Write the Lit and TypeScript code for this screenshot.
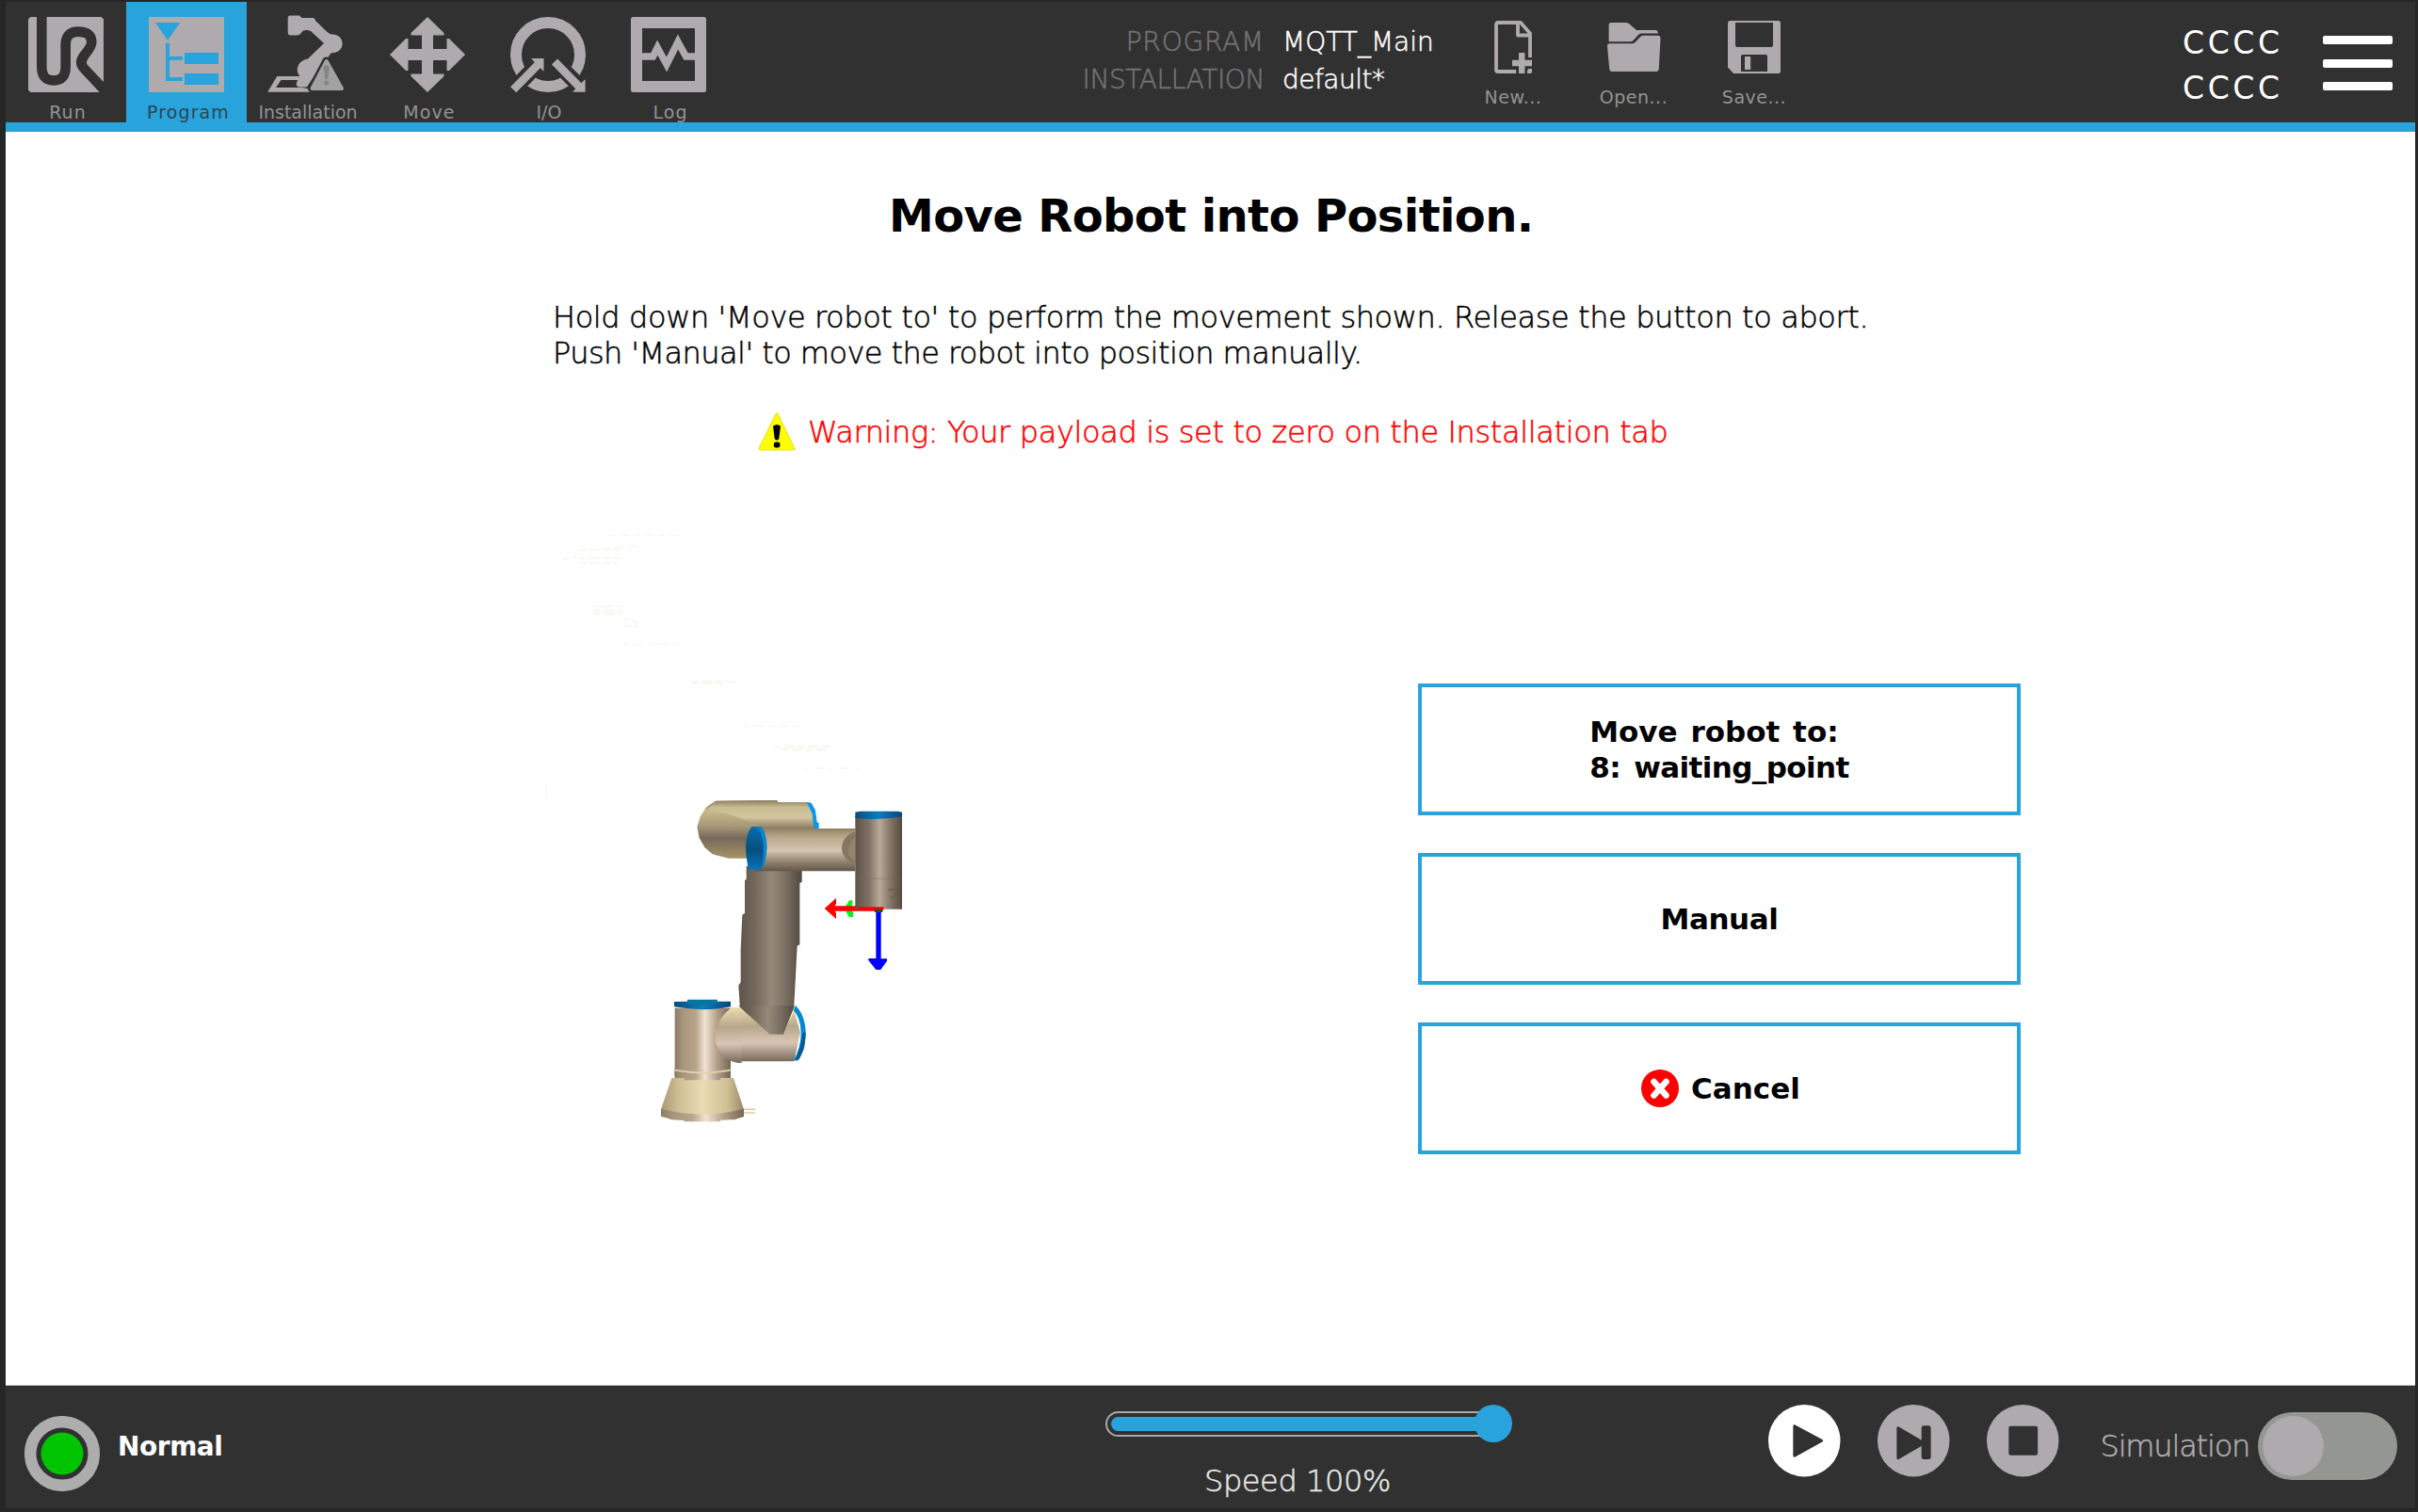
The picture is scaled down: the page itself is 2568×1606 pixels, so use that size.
import { LitElement, html, svg, css } from "lit";
import { customElement, property } from "lit/decorators.js";

const GREY = "#aeaaad";
const DARK = "#313131";
const BLUE = "#29a3dc";

const tabIcons: Record<string, unknown> = {
  run: svg`
    <path d="M4 0H80V80H4Q0 80 0 76V4Q0 0 4 0Z" fill=${GREY} />
    <circle cx="79.6" cy="0.4" r="1.4" fill=${DARK} />
    <path d="M14.3 -2V53Q14.3 67.5 27 67.5Q39.7 67.5 39.7 53V30Q39.7 15.6 53 15.6Q67.3 15.6 67.3 27Q67.3 31 60.5 39.5Q53 48 59.5 55L84 81" fill="none" stroke=${DARK} stroke-width="10.6" />`,
  program: svg`
    <rect width="80" height="80" fill=${GREY} />
    <path d="M7 6H33.3L20 24.7ZM18 27.7H22V42H36V45.7H22V64H36V68H18ZM38 38H74V50H38ZM38 60H74V72H38Z" fill=${BLUE} />`,
  installation: svg`
    <path d="M22 -1.4H32Q33.5 1 35 1H47Q48.5 1.5 49 4L61 15.5Q64 18.5 67 18.6A9.8 9.8 0 1 1 66 38L48 62L40 74.5H31Q28 73 29 70L32 62.5Q28 57 31 51Q34 45.5 41 44.5L58 28L44 15Q41 13.5 36 14.5L32.5 18.5Q31 19.5 29 19.5H22Q19.7 19 19.7 17V2Q19.7 -1 22 -1.4Z" fill=${GREY} />
    <path d="M8.3 63H32L30.6 67H12.5L7 75H35L44 77V79.8H-1.8Z" fill=${GREY} />
    <path d="M60.7 47L77 76H45.5Z" fill="#9d9d9d" stroke=${DARK} stroke-width="9" stroke-linejoin="round" />
    <path d="M60.7 47L77 76H45.5Z" fill="#a3a2a3" stroke="#a3a2a3" stroke-width="4" stroke-linejoin="round" />
    <path d="M57.5 53Q60.7 49 64 53L62.3 66H59.2Z" fill="#878687" />
    <circle cx="60.7" cy="70" r="2.6" fill="#878687" />`,
  move: svg`
    <path d="M40 0L57.5 17V19.5H46V34H60.5V23H63L80 40L63 57H60.5V46H46V60.5H57.5V63L40 80L22.5 63V60.5H34V46H19.5V57H17L0 40L17 23H19.5V34H34V19.5H22.5V17Z" fill=${GREY} />`,
  io: svg`
    <circle cx="40" cy="40" r="34" fill="none" stroke=${GREY} stroke-width="12" />
    <path d="M-2 82.5L30 49.5M47.5 47.5L82 82" stroke=${DARK} stroke-width="16.5" />
    <path d="M3.2 77.2L31 49M47 47.5L75 76" stroke=${GREY} stroke-width="8.6" />
    <path d="M22 44H35.5V58ZM79.6 66V79.8H66Z" fill=${GREY} />`,
  log: svg`
    <rect width="80" height="80" rx="2.5" fill=${GREY} />
    <rect x="12" y="12" width="56" height="56" fill=${DARK} />
    <path d="M11 42H23.5L28.2 32.5L38 50.5L50 26.5L58.5 42H69" fill="none" stroke=${GREY} stroke-width="7.4" stroke-miterlimit="8" />`,
};

@customElement("nav-tab")
class NavTab extends LitElement {
  @property() icon = "run";
  @property() label = "";
  @property({ type: Boolean, reflect: true }) active = false;

  static styles = css`
    :host { display: flex; flex-direction: column; align-items: center; width: 128px; height: 128px; padding-top: 16px; box-sizing: border-box; flex: none; }
    :host([active]) { background: #29a3dc; }
    svg { display: block; width: 80px; height: 80px; overflow: visible; flex: none; }
    .label { margin: 10px 0 0 4px; font-size: 19px; line-height: 22px; letter-spacing: 1.1px; color: #949294; white-space: nowrap; }
    .label.wide { margin-left: 2px; letter-spacing: 0; }
    :host([active]) .label { color: #2c4653; }
  `;

  render() {
    return html`<svg viewBox="0 0 80 80">${tabIcons[this.icon]}</svg>
      <div class="label ${this.label === "Installation" || this.label === "I/O" ? "wide" : ""}">${this.label}</div>`;
  }
}

const fileIcons: Record<string, unknown> = {
  new: svg`<svg viewBox="0 0 40 56" width="40" height="56">
      <path d="M28 2H4Q2 2 2 4V52Q2 54 4 54H38V13.5ZM25 2V15.5H38" fill="none" stroke=${GREY} stroke-width="3.8" stroke-linejoin="round" />
      <path d="M29.2 31V56M16.5 45H40" stroke=${DARK} stroke-width="12" />
      <path d="M29.2 34V56M19 45H40" stroke=${GREY} stroke-width="6.4" />
      <path d="M35.5 56V52.5L37.5 51.5H40V54.5L38.5 56Z" fill=${GREY} />
    </svg>`,
  open: svg`<svg viewBox="0 -2 57 56" width="57" height="56">
      <path d="M4 0H20.5Q22 0 23.5 1.5L31 8H52Q54 8.5 54 11.5H36Q34 11.7 33 13L27 19.5Q26 20.3 24 20.3H1.6V3Q1.6 0 4 0Z" fill=${GREY} />
      <path d="M0 25Q0 22.3 2 22.3H27Q28.5 22 30 20.5L36 14.3Q37 13.7 38.5 13.7H54Q56.5 14 56.5 16.5L54.8 49Q54.5 52 52 52H5Q2.4 52 2.2 49Z" fill=${GREY} />
    </svg>`,
  save: svg`<svg viewBox="0 0 56 56" width="56" height="56">
      <path d="M2.5 0H53.5Q56 0 56 2.5V53.5Q56 56 53.5 56H6L0 49.5V2.5Q0 0 2.5 0Z" fill=${GREY} />
      <path d="M8 2H48V26Q48 28 46 28H10Q8 28 8 26ZM16 36H40Q42 36 42 38V54H14V38Q14 36 16 36Z" fill=${DARK} />
      <rect x="18" y="38" width="6.2" height="14" fill=${GREY} />
    </svg>`,
};

@customElement("robot-view")
class RobotView extends LitElement {
  static styles = css`
    :host { display: block; width: 440px; height: 670px; }
    svg { display: block; }
  `;

  render() {
    return html`<svg width="440" height="670" viewBox="0 0 440 670">
      <defs>
        <linearGradient id="post"><stop offset="0" stop-color="#8c7a66" /><stop offset=".15" stop-color="#a8977d" /><stop offset=".38" stop-color="#b8a58b" /><stop offset=".54" stop-color="#f2e2d2" /><stop offset=".75" stop-color="#b5a28c" /><stop offset="1" stop-color="#756554" /></linearGradient>
        <linearGradient id="foot"><stop offset="0" stop-color="#a89878" /><stop offset=".2" stop-color="#cdbd92" /><stop offset=".5" stop-color="#eadcb4" /><stop offset=".8" stop-color="#d0c094" /><stop offset="1" stop-color="#9c8a6c" /></linearGradient>
        <linearGradient id="link"><stop offset="0" stop-color="#5e5449" /><stop offset=".25" stop-color="#71675a" /><stop offset=".52" stop-color="#95897a" /><stop offset=".75" stop-color="#796e61" /><stop offset="1" stop-color="#51483e" /></linearGradient>
        <linearGradient id="tool"><stop offset="0" stop-color="#5d5347" /><stop offset=".3" stop-color="#817466" /><stop offset=".52" stop-color="#b8a999" /><stop offset=".78" stop-color="#7d7061" /><stop offset="1" stop-color="#554a3f" /></linearGradient>
        <linearGradient id="arm" x2="0" y2="1"><stop offset="0" stop-color="#8f8262" /><stop offset=".2" stop-color="#b8a98a" /><stop offset=".52" stop-color="#d3c4b1" /><stop offset=".8" stop-color="#8d7d6b" /><stop offset="1" stop-color="#63574b" /></linearGradient>
        <linearGradient id="back" x2="0" y2="1"><stop offset="0" stop-color="#80745a" /><stop offset=".18" stop-color="#c8ba8c" /><stop offset=".45" stop-color="#a69878" /><stop offset=".65" stop-color="#75695b" /><stop offset="1" stop-color="#a69467" /></linearGradient>
        <linearGradient id="backTop" x2="0" y2="1"><stop offset="0" stop-color="#8b7e60" /><stop offset=".25" stop-color="#c8bc91" /><stop offset=".6" stop-color="#d3c69f" /><stop offset="1" stop-color="#8b7c62" /></linearGradient>
        <linearGradient id="hip" x2="0" y2="1"><stop offset="0" stop-color="#eadbb0" /><stop offset=".35" stop-color="#b7a78a" /><stop offset=".65" stop-color="#d8c5b5" /><stop offset="1" stop-color="#79695a" /></linearGradient>
        <linearGradient id="cap"><stop offset="0" stop-color="#0a4a7d" /><stop offset=".5" stop-color="#0a7dbd" /><stop offset="1" stop-color="#064878" /></linearGradient>
        <linearGradient id="capV" x2="0" y2="1"><stop offset="0" stop-color="#0a6cae" /><stop offset=".55" stop-color="#04507f" /><stop offset="1" stop-color="#0873b5" /></linearGradient>
      </defs>
      <g fill="none" stroke="#faf8f1" stroke-width="1.5" stroke-dasharray="7 3 12 4">
        <path d="M87 28.500H165M96 40.500H117M102 144.500H162M230 231.500H292M294 276H352M20.500 294V310" />
        <path d="M38 54.500L52 51M56 44L99 43M55 53H100M56 58H96M68 104H101M70 109H102M71 112H100M102 117L118 122M104 125H118M174 184H222M176 186H208M262 253H324M270 256H322" stroke="#f7f4ea" />
      </g>
      <g transform="translate(120 290) scale(.33333)">
        <path d="M240 62L435 60L440 67L535 67L560 150L345 245H282L230 232L205 210L188 180L181 145L192 110L210 82Z" fill="url(#back)" />
        <path d="M240 62L435 60L440 67H535L560 150H390Q300 100 215 90Z" fill="url(#backTop)" />
        <path d="M530 66L545 68L558 92L563 130L569 133V150H553L548 105L540 86Z" fill="#0898e6" />
        <path d="M338 270H515V320L508 324V520L500 524L495 620L490 712L455 802H430L318 725L313 650L320 640V535L325 425L333 420V315L338 312Z" fill="url(#link)" />
        <path d="M290 720H320L412 806L456 804L490 730L510 800L490 892H300Q240 880 240 810Q245 745 290 720Z" fill="url(#hip)" />
        <path d="M110 722H288Q240 770 240 820Q245 870 288 880V945H110Z" fill="url(#post)" />
        <path d="M288 722Q240 760 240 818Q245 885 310 897H323V750L305 722Z" fill="url(#hip)" />
        <path d="M313 715L412 806H456L492 715Z" fill="url(#link)" />
        <path d="M495 714Q530 750 527 815Q522 870 500 890L488 888Q512 850 512 800Q510 750 488 730Z" fill="#0788ce" />
        <path d="M518 800H527L522 850L506 886L494 889Q510 850 518 800Z" fill="#075b92" />
        <path d="M108 702L150 701V695H245V701H288V718Q200 735 108 718Z" fill="url(#cap)" />
        <path d="M150 696H245V708Q200 716 150 708Z" fill="#08759f" />
        <path d="M100 945H297L330 1045V1068Q200 1100 66 1068V1045Z" fill="url(#foot)" />
        <path d="M66 1043Q200 1078 330 1043V1068L300 1078H255V1084H140V1080L100 1078L66 1066Z" fill="url(#post)" />
        <path d="M109 915Q200 940 288 915V940L255 946V952H140V946L109 938Z" fill="url(#post)" />
        <path d="M109 920Q200 936 288 920" fill="none" stroke="#e2d3ab" stroke-width="5" />
        <path d="M330 1045H366M330 1056H366" stroke="#dccbb0" stroke-width="5" />
        <path d="M365 150H685V286H365Z" fill="url(#arm)" />
        <path d="M685 160Q642 175 642 215Q645 250 685 262Z" fill="#857761" />
        <path d="M685 176Q660 200 664 235L685 256Z" fill="#94856b" />
        <path d="M355 144H385Q403 170 403 210Q402 255 385 281H345Q336 240 336 205Q338 165 355 144Z" fill="url(#capV)" />
        <path d="M358 144H386Q403 170 403 210Q402 250 388 278Q394 240 392 205Q388 160 372 146Z" fill="#0886d0" />
        <path d="M665 380L676 378V392L671 405L678 418V432H665L654 412V398Z" fill="#00f51b" />
        <path d="M610 405H765" stroke="#f00" stroke-width="17" />
        <path d="M587 405L624 372V390L616 405L624 420V438Z" fill="#f00" />
        <path d="M685 110H834V407H685Z" fill="url(#tool)" />
        <path d="M695 400H775V411H695Z" fill="#f00" />
        <path d="M685 310H834" stroke="#746858" stroke-width="3" opacity=".4" />
        <path d="M790 348L806 342L818 350L812 366L796 370" fill="none" stroke="#665b48" stroke-width="4" />
        <path d="M685 98L700 95H820L834 98V112Q760 126 685 116Z" fill="url(#cap)" />
        <path d="M751 412H767V565H786V572L766 600H751L727 570V564H751Z" fill="#00f" />
        <path d="M746 407H772V417H746Z" fill="#33472f" />
      </g>
    </svg>`;
  }
}

@customElement("app-root")
class AppRoot extends LitElement {
  static styles = css`
    :host { display: block; width: 2568px; height: 1606px; box-sizing: border-box; padding: 2px 3px 4px 6px; background: #272627; overflow: hidden; font-family: "DejaVu Sans", sans-serif; }
    * { box-sizing: border-box; }
    .screen { display: flex; flex-direction: column; height: 1600px; background: #fff; }
    .light { font-weight: 200; -webkit-text-stroke: 0.5px currentColor; }

    header { display: flex; height: 138px; background: #313131; border-bottom: 10px solid #29a3dc; flex: none; }
    .files { display: grid; grid-template-columns: 196px max-content; column-gap: 19px; align-content: start; padding-top: 23px; margin-left: 373px; width: 396px; flex: none; font-size: 28px; line-height: 40px; white-space: nowrap; }
    .key { color: #747274; text-align: right; }
    .key.program { letter-spacing: 0.8px; }
    .key.install { letter-spacing: -0.4px; }
    .value { color: #fff; }
    .value.install { letter-spacing: -0.5px; }
    .action { display: flex; flex-direction: column; align-items: center; width: 128px; padding-top: 20px; flex: none; }
    .action svg { display: block; flex: none; }
    .action span { margin-top: 14px; font-size: 19px; line-height: 22px; color: #949294; letter-spacing: 0.5px; }
    .codes { margin-left: 391px; padding-top: 20px; width: 149px; flex: none; color: #fff; font-size: 33px; line-height: 48px; letter-spacing: 3.6px; }
    .menu { display: flex; flex-direction: column; gap: 15.500px; padding-top: 36px; }
    .menu i { display: block; width: 74px; height: 9px; border-radius: 2px; background: #fff; }

    main { height: 1332px; flex: none; padding-top: 61px; color: #000; border-bottom: 1px solid #b5b5b5; }
    h1 { margin: 0; padding-left: 938px; font-size: 48px; line-height: 56px; font-weight: 700; letter-spacing: -0.6px; white-space: nowrap; }
    .intro { margin: 61px 0 0; padding-left: 581px; font-size: 32px; line-height: 38px; letter-spacing: -0.395px; white-space: nowrap; }
    .intro .second { letter-spacing: -0.57px; }
    .warning { display: flex; gap: 13px; margin: 44px 0 0 799px; height: 42px; line-height: 42px; font-size: 32px; letter-spacing: -0.37px; color: #f00; white-space: nowrap; }
    .work { display: flex; padding: 60px 0 0 554px; }
    .choices { display: flex; flex-direction: column; gap: 40px; margin: 186px 0 0 506px; }
    .choice { display: flex; align-items: center; justify-content: center; gap: 13px; width: 640px; height: 140px; margin: 0; padding: 0; border: 4px solid #29a3dc; background: #fff; font: 700 31px/38px "DejaVu Sans", sans-serif; color: #000; text-align: left; }
    .l1 { word-spacing: 3px; }
    .l2 { letter-spacing: -0.6px; word-spacing: 4px; }
    .manual { letter-spacing: -0.4px; }
    .cancel { padding-left: 3px; }

    footer { display: flex; height: 130px; background: #313131; flex: none; }
    .lamp { margin: 32px 0 0 20px; }
    .lamp, .round svg { display: block; flex: none; }
    .mode { margin: 45px 0 0 19px; width: 1049px; flex: none; font-size: 28px; line-height: 40px; font-weight: 700; color: #fff; letter-spacing: -0.45px; }
    .speed { width: 432px; padding-top: 18px; flex: none; }
    .track { display: flex; align-items: center; width: 432px; height: 44px; }
    .rail { display: flex; align-items: center; width: 426px; height: 27px; padding: 0 4px; border: 2.500px solid #a9a9a9; border-radius: 14px; }
    .fill { width: 100%; height: 15px; border-radius: 8px; background: #29a3dc; }
    .knob { width: 40px; height: 40px; margin-left: -34px; border-radius: 50%; background: #29a3dc; flex: none; }
    .speed p { margin: 17px 0 0 105px; font-size: 32px; line-height: 44px; letter-spacing: -0.4px; color: #e8e8e8; white-space: nowrap; }
    .round { display: flex; gap: 39.500px; margin: 20px 0 0 272px; }
    .simulation { display: flex; margin: 28px 0 0 44px; }
    .simulation span { width: 167px; padding-top: 14px; font-size: 32px; line-height: 44px; letter-spacing: -1.18px; color: #b0adb0; }
    .toggle { width: 148px; height: 72px; padding: 4px 5px; border-radius: 36px; background: #939691; }
    .toggle i { display: block; width: 65px; height: 64px; border-radius: 50%; background: #aeaaad; }
  `;

  private action(name: string, label: string) {
    return html`<div class="action">${fileIcons[name]}<span>${label}</span></div>`;
  }

  render() {
    return html`<div class="screen">
      <header>
        <nav-tab icon="run" label="Run"></nav-tab>
        <nav-tab icon="program" label="Program" active></nav-tab>
        <nav-tab icon="installation" label="Installation"></nav-tab>
        <nav-tab icon="move" label="Move"></nav-tab>
        <nav-tab icon="io" label="I/O"></nav-tab>
        <nav-tab icon="log" label="Log"></nav-tab>
        <div class="files light">
          <span class="key program">PROGRAM</span><span class="value">MQTT_Main</span>
          <span class="key install">INSTALLATION</span><span class="value install">default*</span>
        </div>
        ${this.action("new", "New...")}${this.action("open", "Open...")}${this.action("save", "Save...")}
        <div class="codes"><div>CCCC</div><div>CCCC</div></div>
        <div class="menu"><i></i><i></i><i></i></div>
      </header>
      <main>
        <h1>Move Robot into Position.</h1>
        <p class="intro light">Hold down 'Move robot to' to perform the movement shown. Release the button to abort.<br /><span class="second">Push 'Manual' to move the robot into position manually.</span></p>
        <div class="warning light">
          <svg width="40" height="42" viewBox="0 0 40 42">
            <path d="M20 2.500L37.500 38.500H2.500Z" fill="#ff0" stroke="#f0ea20" stroke-width="4" stroke-linejoin="round" />
            <path d="M20 4L36.500 38H3.500Z" fill="#ff0" stroke="#ff0" stroke-width="2" stroke-linejoin="round" />
            <path d="M16 14.500Q20 11.500 24 14.500L22.300 28Q20 31 17.700 28Z" fill="#000" />
            <rect x="16.800" y="31.500" width="6.600" height="6" rx="2.200" fill="#000" />
          </svg>
          <span>Warning: Your payload is set to zero on the Installation tab</span>
        </div>
        <div class="work">
          <robot-view></robot-view>
          <div class="choices">
            <button class="choice"><span><span class="l1">Move robot to:</span><br /><span class="l2">8: waiting_point</span></span></button>
            <button class="choice"><span class="manual">Manual</span></button>
            <button class="choice cancel">
              <svg width="40" height="40" viewBox="0 0 40 40">
                <circle cx="20" cy="20" r="20" fill="#f00" />
                <path d="M13.500 13L26.500 27.500M26.500 13L13.500 27.500" stroke="#fff" stroke-width="6.500" stroke-linecap="round" />
              </svg>
              <span>Cancel</span>
            </button>
          </div>
        </div>
      </main>
      <footer>
        <svg class="lamp" width="80" height="80" viewBox="0 0 80 80">
          <circle cx="40" cy="40" r="33.800" fill="none" stroke="#adadad" stroke-width="12.500" />
          <circle cx="40" cy="40" r="22.500" fill="#00c400" />
        </svg>
        <div class="mode">Normal</div>
        <div class="speed">
          <div class="track"><div class="rail"><div class="fill"></div></div><div class="knob"></div></div>
          <p class="light">Speed 100%</p>
        </div>
        <div class="round">
          <svg width="76.500" height="76.500" viewBox="0 0 77 77"><circle cx="38.500" cy="38.500" r="38.500" fill="#fff" /><path d="M28 23L57 38.500L28 54.500Z" fill=${DARK} stroke=${DARK} stroke-width="3" stroke-linejoin="round" /></svg>
          <svg width="76.500" height="76.500" viewBox="0 0 77 77"><circle cx="38.500" cy="38.500" r="38.500" fill=${GREY} /><path d="M22 25L46 39V43L22 57Z" fill=${DARK} stroke=${DARK} stroke-width="3" stroke-linejoin="round" /><rect x="47" y="22.500" width="10" height="36" rx="2.500" fill=${DARK} /></svg>
          <svg width="76.500" height="76.500" viewBox="0 0 77 77"><circle cx="38.500" cy="38.500" r="38.500" fill=${GREY} /><rect x="23.500" y="23" width="31" height="31" rx="2" fill=${DARK} /></svg>
        </div>
        <div class="simulation"><span class="light">Simulation</span><div class="toggle"><i></i></div></div>
      </footer>
    </div>`;
  }
}
